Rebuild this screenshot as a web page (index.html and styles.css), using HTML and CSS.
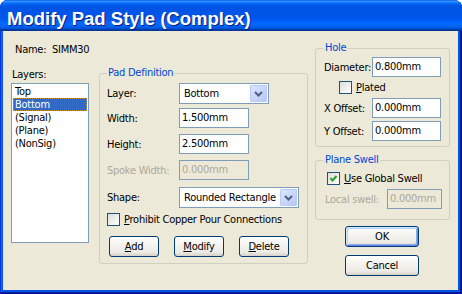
FILE: index.html
```html
<!DOCTYPE html>
<html>
	<head>
		<meta charset="utf-8">
		<title>Modify Pad Style (Complex)</title>
		<link rel="stylesheet" href="styles.css">
	</head>
	<body>
		<div class="window">
			<div class="titlebar"><span class="title">Modify Pad Style (Complex)</span></div>
			<div class="client">
				<div class="main">
					<div class="name-row"><span class="name-lbl">Name:</span><span>SIMM30</span></div>
					<div class="main-body">
						<div class="layers">
							<div class="layers-lbl">Layers:</div>
							<ul class="listbox">
								<li>Top</li>
								<li class="sel">Bottom</li>
								<li>(Signal)</li>
								<li>(Plane)</li>
								<li>(NonSig)</li>
							</ul>
						</div>
						<fieldset class="group paddef">
							<legend>Pad Definition</legend>
							<div class="row r-layer">
								<span class="lbl">Layer:</span>
								<div class="combo">
									<span class="combo-text">Bottom</span>
									<span class="combo-btn"><svg width="9" height="6" viewBox="0 0 9 6"><polyline points="1,1 4.5,4.5 8,1" fill="none" stroke="#4D6185" stroke-width="2"/></svg></span>
								</div>
							</div>
							<div class="row r-width">
								<span class="lbl">Width:</span>
								<span class="edit">1.500mm</span>
							</div>
							<div class="row r-height">
								<span class="lbl">Height:</span>
								<span class="edit">2.500mm</span>
							</div>
							<div class="row r-spoke">
								<span class="lbl dis">Spoke Width:</span>
								<span class="edit off">0.000mm</span>
							</div>
							<div class="row r-shape">
								<span class="lbl">Shape:</span>
								<div class="combo wide">
									<span class="combo-text">Rounded Rectangle</span>
									<span class="combo-btn"><svg width="9" height="6" viewBox="0 0 9 6"><polyline points="1,1 4.5,4.5 8,1" fill="none" stroke="#4D6185" stroke-width="2"/></svg></span>
								</div>
							</div>
							<div class="row r-check">
								<span class="cb"></span>
								<span class="cb-text"><u>P</u>rohibit Copper Pour Connections</span>
							</div>
							<div class="btn-row">
								<span class="btn small"><u>A</u>dd</span>
								<span class="btn small"><u>M</u>odify</span>
								<span class="btn small"><u>D</u>elete</span>
							</div>
						</fieldset>
					</div>
				</div>
				<div class="side">
					<fieldset class="group hole">
						<legend>Hole</legend>
						<div class="row h-diam">
							<span class="lbl">Diameter:</span>
							<span class="edit">0.800mm</span>
						</div>
						<div class="row h-plated">
							<span class="cb"></span>
							<span class="cb-text"><u>P</u>lated</span>
						</div>
						<div class="row h-x">
							<span class="lbl">X Offset:</span>
							<span class="edit">0.000mm</span>
						</div>
						<div class="row h-y">
							<span class="lbl">Y Offset:</span>
							<span class="edit">0.000mm</span>
						</div>
					</fieldset>
					<fieldset class="group swell">
						<legend>Plane Swell</legend>
						<div class="row s-check">
							<span class="cb checked"><svg width="9" height="9" viewBox="0 0 9 9"><polyline points="1.5,4 3.5,6.5 7.5,2" fill="none" stroke="#21A121" stroke-width="2"/></svg></span>
							<span class="cb-text"><u>U</u>se Global Swell</span>
						</div>
						<div class="row s-local">
							<span class="lbl dis">Local swell:</span>
							<span class="edit off">0.000mm</span>
						</div>
					</fieldset>
					<span class="btn dlg default">OK</span>
					<span class="btn dlg cancel">Cancel</span>
				</div>
			</div>
		</div>
	</body>
</html>
```

FILE: styles.css
```css
*{margin:0;padding:0;box-sizing:border-box;}
ul{list-style:none;}
body{background:#fff;font:11px/13px "DejaVu Sans Condensed","DejaVu Sans","Liberation Sans",sans-serif;font-stretch:condensed;letter-spacing:-0.25px;color:#000;}

/* window frame */
.window{width:462px;height:294px;background:#0054E3;border-radius:8px 8px 0 0;display:flex;flex-direction:column;box-shadow:inset -1px -1px #00138C,inset 1px 0 #0831D9,inset -2px -2px #001EA0,inset 2px 0 #166AEE;}
.titlebar{height:31px;border-radius:8px 8px 0 0;padding:7px 0 0 7px;background:linear-gradient(to bottom,#0058EE 0%,#3593FF 4%,#288EFF 6%,#127DFF 8%,#036FFC 10%,#0262EE 14%,#0057E5 20%,#0054E3 24%,#0055EB 56%,#005BF5 66%,#026AFE 76%,#0062EF 86%,#0052D6 92%,#0040AB 94%,#003092 100%);}
.title{font:bold 18.5px/24px "Liberation Sans",Arial,sans-serif;font-stretch:normal;letter-spacing:0;color:#fff;text-shadow:1px 1px #0A1883;}
.client{height:259px;margin:0 4px 4px 3px;background:#ECE9D8;display:flex;}

/* left part */
.main{width:305px;padding-left:8px;}
.name-row{padding:12px 0 0 4px;height:25px;display:flex;}
.name-lbl{width:37px;}
.main-body{display:flex;margin-top:10px;}
.layers{width:78px;}
.layers-lbl{padding:2px 0 0 1px;height:17px;}
.listbox{width:78px;height:160px;border:1px solid #7F9DB9;background:#fff;padding:1px;}
.listbox li{height:13px;padding-left:2px;}
.listbox li.sel{background:#316AC5;color:#fff;outline:1px dotted #CE953A;outline-offset:-1px;}

/* group boxes */
.group{border:1px solid #D0D0BF;border-radius:3px;}
.group legend{color:#0046D5;line-height:14px;padding:0 1px;}
.row{display:flex;align-items:center;height:20px;}
.lbl{flex:none;}
.dis{color:#ACA899;}
.edit{height:20px;border:1px solid #7F9DB9;background:#fff;padding:2px 0 0 2px;}
.edit.off{background:#ECE9D8;color:#ACA899;}
.combo{width:90px;height:21px;border:1px solid #7F9DB9;background:#fff;padding:1px;display:flex;}
.combo.wide{width:120px;}
.combo-text{flex:1;padding:2px 0 0 3px;overflow:hidden;white-space:nowrap;}
.combo-btn{width:17px;height:17px;border:1px solid #BACBF8;border-radius:1px;background:linear-gradient(135deg,#DCE5FD,#B5C8F7);display:flex;align-items:center;justify-content:center;}
.cb{width:13px;height:13px;border:1px solid #1C5180;background:linear-gradient(135deg,#DCDCD7,#fff);display:flex;align-items:center;justify-content:center;flex:none;}
.cb-text{margin-left:4px;}

/* buttons */
.btn{display:block;height:21px;border:1px solid #003C74;border-radius:3px;background:linear-gradient(to bottom,#fff 0%,#F4F3EE 40%,#ECEBE6 80%,#D6D0C5 100%);text-align:center;line-height:19px;}

/* pad definition */
.paddef{width:209px;height:198px;margin-left:10px;padding:3px 0 0 7px;}
.paddef .lbl{width:72px;}
.paddef .edit{width:70px;}
.r-layer{height:21px;}
.r-width{margin-top:4px;}
.r-height,.r-spoke{margin-top:6px;}
.r-shape{margin-top:7px;height:21px;}
.r-check{margin-top:5px;height:13px;}
.btn-row{display:flex;margin-top:10px;padding-left:2px;}
.btn.small{width:50px;margin-right:15px;}

/* right part */
.side{width:135px;margin-left:7px;padding-top:10px;}
.hole{height:106px;padding:2px 0 0 8px;}
.hole .lbl{width:48px;}
.hole .edit{width:69px;}
.h-plated{height:13px;margin:4px 0 0 15px;}
.h-x{margin-top:4px;}
.h-y{margin-top:3px;}
.swell{height:67px;margin-top:6px;padding:5px 0 0 8px;}
.s-check{height:13px;margin-left:3px;}
.s-local{margin-top:4px;padding-left:1px;}
.swell .lbl{width:62px;}
.swell .edit{width:55px;}
.btn.dlg{width:74px;margin-left:30px;}
.btn.default{margin-top:6px;box-shadow:inset 1px 1px #CEE7FF,inset -1px -1px #6982EE,inset 2px 2px #BCD4F6,inset -2px -2px #89ADE4;}
.btn.cancel{margin-top:8px;}
```
